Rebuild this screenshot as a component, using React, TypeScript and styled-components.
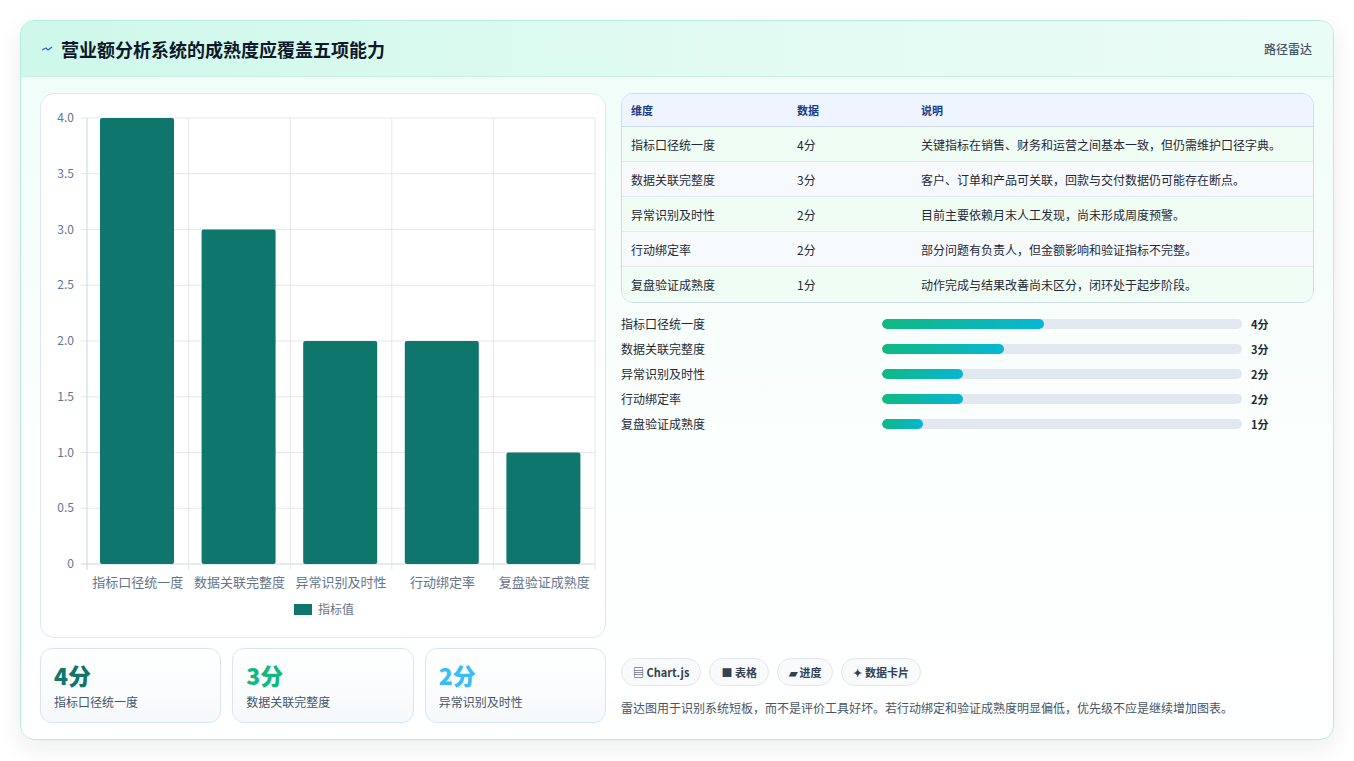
import React from "react";
import styled, { createGlobalStyle } from "styled-components";

const Global = createGlobalStyle`
  html, body { margin: 0; padding: 0; background: #fff; }
  body { font-family: "Noto Sans CJK SC", "Noto Sans", sans-serif; }
  * { box-sizing: border-box; }
`;

const Page = styled.div`
  width: 1354px; height: 761px; padding: 20px 20px 21px 20px;
`;
const Card = styled.div`
  height: 720px; border: 1px solid #b6ece0; border-radius: 14px; overflow: hidden;
  display: flex; flex-direction: column;
  background: linear-gradient(180deg, #effdf8 0%, #fbfffe 60%, #ffffff 100%);
  box-shadow: 0 8px 24px rgba(15, 23, 42, 0.08);
`;
const Header = styled.div`
  height: 56px; flex: none; display: flex; align-items: center; justify-content: space-between;
  padding: 0 21px 0 20px; border-bottom: 1px solid #c9eee6;
  background: linear-gradient(90deg, #cdf8ea 0%, #e3fbf3 60%, #eafcf6 100%);
`;
const Title = styled.h1`
  margin: 0; font-size: 18px; font-weight: 700; color: #0f172a; display: flex; align-items: center; gap: 8px;
`;
const Tag = styled.span` font-size: 12px; color: #475569; font-weight: 500; `;
const Body = styled.div`
  flex: 1; display: grid; grid-template-columns: 566px 693px; gap: 15px; padding: 16px 19px 18px 19px;
`;
const Col = styled.div` display: flex; flex-direction: column; min-height: 0; `;
const ChartCard = styled.div`
  height: 545px; background: #fff; border: 1px solid #dde7ef; border-radius: 14px; overflow: hidden;
`;
const Stats = styled.div` display: grid; grid-template-columns: repeat(3, 1fr); gap: 11px; margin-top: 10px; `;
const Stat = styled.div`
  height: 75px; border: 1px solid #d6e6f2; border-radius: 12px; padding: 11px 13px;
  background: linear-gradient(180deg, #ffffff, #f6f9fc);
`;
const StatVal = styled.div<{ $c: string }>`
  font-size: 23px; font-weight: 800; color: ${p => p.$c}; line-height: 30px;
`;
const StatLabel = styled.div` font-size: 12px; color: #475569; margin-top: 3px; `;

const Table = styled.table`
  width: 100%; border-collapse: separate; border-spacing: 0; border: 1px solid #cfdbe6; border-radius: 12px; overflow: hidden; font-size: 12px;
`;
const Th = styled.th`
  text-align: left; font-weight: 700; font-size: 11px; color: #1e3a8a; background: #eef5ff; height: 33px; padding: 0 9px;
  border-bottom: 1px solid #cfdbe6;
`;
const Tr = styled.tr<{ $alt: boolean }>` background: ${p => (p.$alt ? "#f7fafc" : "#f0fdf5")}; `;
const Td = styled.td<{ $last: boolean }>`
  height: 35px; padding: 0 9px; color: #1f2937; border-bottom: ${p => (p.$last ? "none" : "1px solid #e2eaf0")};
`;
const Bars = styled.div` display: flex; flex-direction: column; gap: 9px; margin-top: 12px; `;
const BarRow = styled.div` display: grid; grid-template-columns: 261px 360px 1fr; align-items: center; gap: 0; height: 16px; `;
const BarLabel = styled.span` font-size: 12px; color: #1f2937; `;
const Track = styled.div` height: 10px; border-radius: 5px; background: #e2e8f0; overflow: hidden; `;
const Fill = styled.div` height: 100%; border-radius: 5px; background: linear-gradient(90deg, #10b981, #06b6d4); `;
const BarVal = styled.span` font-size: 11px; font-weight: 700; color: #1f2937; padding-left: 9px; `;
const Spacer = styled.div` flex: 1; `;
const Chips = styled.div` display: flex; gap: 8px; `;
const Chip = styled.span`
  height: 28px; padding: 0 11px; border: 1px solid #e2e8f0; border-radius: 14px; background: #f8fafc;
  display: inline-flex; align-items: center; gap: 4px; font-size: 11px; font-weight: 700; color: #334155;
`;
const Note = styled.p` margin: 13px 0 7px; font-size: 12px; color: #475569; `;

const rows = [
  ["指标口径统一度", 4, "关键指标在销售、财务和运营之间基本一致，但仍需维护口径字典。"],
  ["数据关联完整度", 3, "客户、订单和产品可关联，回款与交付数据仍可能存在断点。"],
  ["异常识别及时性", 2, "目前主要依赖月末人工发现，尚未形成周度预警。"],
  ["行动绑定率", 2, "部分问题有负责人，但金额影响和验证指标不完整。"],
  ["复盘验证成熟度", 1, "动作完成与结果改善尚未区分，闭环处于起步阶段。"],
] as const;

function Chart() {
  const L = 46, R = 554, T = 24, B = 470;
  const step = (R - L) / 5;
  const ys = [0, 0.5, 1, 1.5, 2, 2.5, 3, 3.5, 4];
  const y = (v: number) => B - (v / 4) * (B - T);
  return (
    <svg width="566" height="545" viewBox="0 0 566 545" fontFamily="'Noto Sans CJK SC', sans-serif">
      {ys.map(v => (
        <g key={v}>
          <line x1={L - 6} x2={R} y1={y(v)} y2={y(v)} stroke={v === 0 ? "#cbd5e1" : "#e5e7eb"} />
          <text x={33} y={y(v) + 4} fontSize="12" fill="#64748b" textAnchor="end">{v === 0 ? "0" : v.toFixed(1)}</text>
        </g>
      ))}
      {[0, 1, 2, 3, 4, 5].map(i => (
        <line key={i} x1={L + i * step} x2={L + i * step} y1={T} y2={B + 6} stroke={i === 0 ? "#cbd5e1" : "#e5e7eb"} />
      ))}
      {rows.map(([n, v], i) => (
        <g key={n}>
          <rect x={L + i * step + 13} y={y(v)} width={74} height={B - y(v)} rx="2" fill="#0f766e" />
          <text x={L + i * step + step / 2} y={493} fontSize="13" fill="#64748b" textAnchor="middle">{n}</text>
        </g>
      ))}
      <rect x={253} y={510} width={18} height={11} fill="#0f766e" />
      <text x={277} y={520} fontSize="12" fill="#64748b">指标值</text>
    </svg>
  );
}

export default function App() {
  return (
    <Page>
      <Global />
      <Card>
        <Header>
          <Title>
            <svg width="12" height="10" viewBox="0 0 12 10"><path d="M1 6 L5 4 L7 6 L11 3" stroke="#2563eb" strokeWidth="1.3" fill="none" /></svg>
            营业额分析系统的成熟度应覆盖五项能力
          </Title>
          <Tag>路径雷达</Tag>
        </Header>
        <Body>
          <Col>
            <ChartCard><Chart /></ChartCard>
            <Stats>
              <Stat><StatVal $c="#0f766e">4分</StatVal><StatLabel>指标口径统一度</StatLabel></Stat>
              <Stat><StatVal $c="#10b981">3分</StatVal><StatLabel>数据关联完整度</StatLabel></Stat>
              <Stat><StatVal $c="#38bdf8">2分</StatVal><StatLabel>异常识别及时性</StatLabel></Stat>
            </Stats>
          </Col>
          <Col>
            <Table>
              <colgroup><col style={{ width: 166 }} /><col style={{ width: 124 }} /><col /></colgroup>
              <thead><tr><Th>维度</Th><Th>数据</Th><Th>说明</Th></tr></thead>
              <tbody>
                {rows.map(([n, v, d], i) => (
                  <Tr key={n} $alt={i % 2 === 1}>
                    <Td $last={i === 4}>{n}</Td><Td $last={i === 4}>{v}分</Td><Td $last={i === 4}>{d}</Td>
                  </Tr>
                ))}
              </tbody>
            </Table>
            <Bars>
              {rows.map(([n, v]) => (
                <BarRow key={n}>
                  <BarLabel>{n}</BarLabel>
                  <Track><Fill style={{ width: `${v * 11.25}%` }} /></Track>
                  <BarVal>{v}分</BarVal>
                </BarRow>
              ))}
            </Bars>
            <Spacer />
            <Chips>
              <Chip>▤ Chart.js</Chip>
              <Chip>■ 表格</Chip>
              <Chip>▰ 进度</Chip>
              <Chip>✦ 数据卡片</Chip>
            </Chips>
            <Note>雷达图用于识别系统短板，而不是评价工具好坏。若行动绑定和验证成熟度明显偏低，优先级不应是继续增加图表。</Note>
          </Col>
        </Body>
      </Card>
    </Page>
  );
}
